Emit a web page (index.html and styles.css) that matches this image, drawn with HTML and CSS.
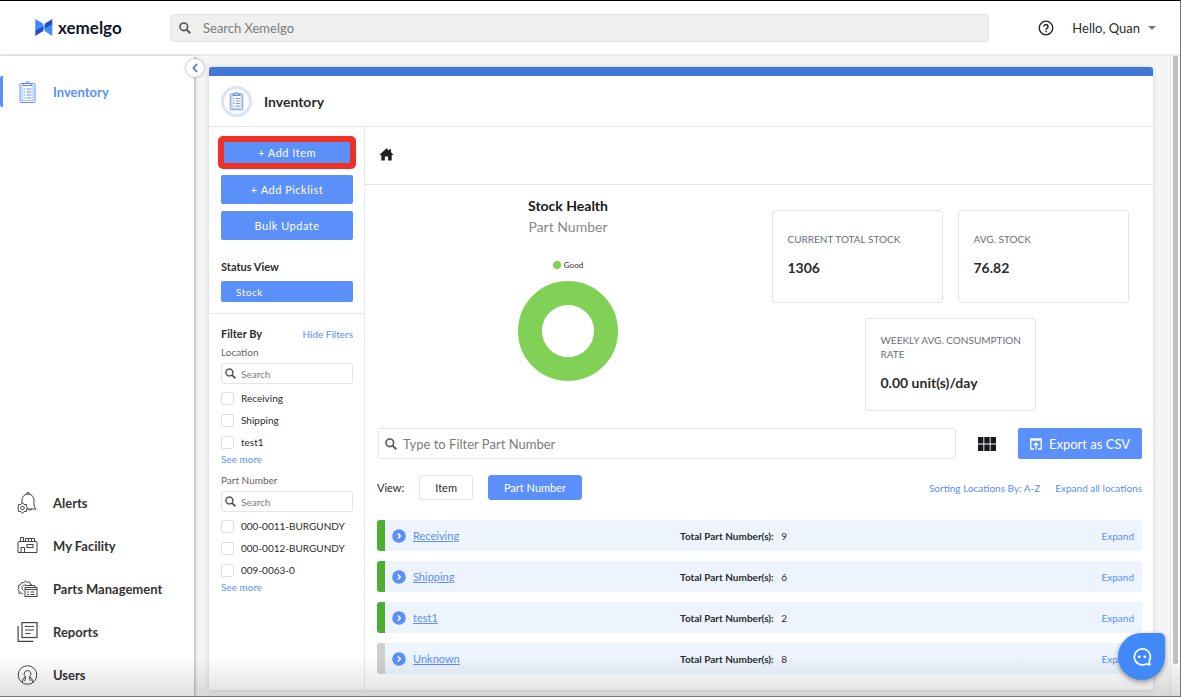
FILE: index.html
```
<!DOCTYPE html>
<html lang="en">
<head>
    <meta charset="UTF-8">
    <meta name="viewport" content="width=device-width, initial-scale=1.0">
    <title>Xemelgo - Inventory</title>
    <link rel="stylesheet" href="styles.css">
</head>
<body>
    <!-- shared icons -->
    <svg class="sprite" width="0" height="0" aria-hidden="true">
        <symbol id="search" viewBox="0 0 12 12">
            <circle cx="4.8" cy="4.8" r="3.8" fill="none" stroke="currentColor" stroke-width="1.6"/>
            <path d="M7.6 7.6L11.2 11.2" stroke="currentColor" stroke-width="2"/>
        </symbol>
        <symbol id="clipboard" viewBox="0 0 18 24">
            <g fill="none" stroke="currentColor" stroke-width="1">
                <rect x="1.5" y="3.5" width="15" height="19" rx="1"/>
                <rect x="3.5" y="5.5" width="11" height="15" stroke-opacity="0.6"/>
                <path d="M5 5.5v-2h2.2a1.8 1.8 0 0 1 3.6 0H13v2z"/>
                <path d="M5 9h1.5M8 9h5M5 12h1.5M8 12h5M5 15h1.5M8 15h5M5 18h1.5M8 18h5"/>
            </g>
        </symbol>
        <symbol id="go" viewBox="0 0 14 14">
            <circle cx="7" cy="7" r="6.8" fill="#5b8ff9"/>
            <path d="M5.8 4.4L8.4 7L5.8 9.6" fill="none" stroke="#fff" stroke-width="1.4"/>
        </symbol>
    </svg>

    <header class="topbar">
        <a class="logo" href="#">
            <svg width="18" height="17" viewBox="0 0 18 17">
                <path d="M.3 0L7.500 4.300Q8.600 5.200 8.600 7L.3 11z" fill="#3f8cf7"/>
                <path d="M8.600 7v3.500q0 1.300-1.100 2L.3 17v-6z" fill="#1f50d0"/>
                <path d="M17.300 0L10.500 4.300Q9.400 5.200 9.400 7v3L17.300 6z" fill="#1f50d0"/>
                <path d="M9.400 9.500v1q0 1.300 1.100 2l6.800 4.500V6z" fill="#3f8cf7"/>
            </svg>
            <span>xemelgo</span>
        </a>
        <div class="search-box top-search">
            <svg width="12" height="12"><use href="#search"/></svg>
            <input type="text" placeholder="Search Xemelgo" aria-label="Search Xemelgo">
        </div>
        <button class="icon-button help" type="button" aria-label="Help">
            <svg width="16" height="16" viewBox="0 0 16 16" fill="none" stroke="#222">
                <circle cx="8" cy="8" r="6.800" stroke-width="1.300"/>
                <path d="M6 6.600a2 2 0 1 1 3.100 1.600q-1.100.7-1.100 1.500" stroke-width="1.500"/>
                <path d="M8 10.700v1.500" stroke-width="1.500"/>
            </svg>
        </button>
        <button class="user" type="button">Hello, Quan <span class="caret"></span></button>
    </header>

    <div class="layout">
        <nav class="sidebar">
            <a class="nav-item active" href="#">
                <svg width="18" height="24"><use href="#clipboard"/></svg>
                <span>Inventory</span>
            </a>
            <div class="nav-bottom">
                <a class="nav-item" href="#">
                    <svg width="20" height="22" viewBox="0 0 20 22" fill="none" stroke="#444">
                        <path d="M4.500 11V8a6 6 0 0 1 12 0v5q0 2 2 4H9"/>
                        <path d="M9 2q0-1.500 1.500-1.500T12 2M11 17.500q2 2 3.500-.5"/>
                        <path d="M5 10.800l1.600 1.700 2.500.1v2.300L10 16l-.9 1.200v2.200l-2.500.1L5 21.300l-1.600-1.800-2.500-.1v-2.200L.4 16l.5-1.100v-2.300l2.500-.1z"/>
                        <circle cx="5" cy="16" r="1.800"/>
                    </svg>
                    <span>Alerts</span>
                </a>
                <a class="nav-item" href="#">
                    <svg width="20" height="17" viewBox="0 0 20 17" fill="none" stroke="#444">
                        <path d="M.5 5.500q0-1 1-1h17q1 0 1 1v10h-19zM3 4V.5h3V4M8 4V1.500h9V4M11 1.500V4M14 1.500V4"/>
                        <path d="M3.500 15.500v-5h3.500v5"/>
                        <rect x="9.500" y="7.500" width="6" height="3"/>
                    </svg>
                    <span>My Facility</span>
                </a>
                <a class="nav-item" href="#">
                    <svg width="20" height="17" viewBox="0 0 20 17" fill="none" stroke="#444">
                        <path d="M5.500 14.500L4 13l-2.500.3L1.700 11 .5 9.500 1.500 8 .8 5.500 3 4.700 4 2.500l2.300.3L8 .8l1.700 1.500 2.500-.3.600 2.500 1.700.5"/>
                        <path d="M6 10.500Q3.500 9 4.500 6.700T8.500 5"/>
                        <path d="M8 5.500h9l.5 1.500"/>
                        <rect x="7.500" y="7.500" width="12" height="9"/>
                        <path d="M7.500 9.500h12M9.500 12h2M13 12h4M9.500 14.500h2M13 14.500h4"/>
                    </svg>
                    <span>Parts Management</span>
                </a>
                <a class="nav-item" href="#">
                    <svg width="20" height="20" viewBox="0 0 20 20" fill="none" stroke="#444" stroke-width="1.200">
                        <rect x="4.500" y=".6" width="15" height="14.900"/>
                        <path d="M.6 4v15.400H16M7.500 4.500h9M7.500 8h9M7.500 11.500h5.500"/>
                    </svg>
                    <span>Reports</span>
                </a>
                <a class="nav-item" href="#">
                    <svg width="20" height="20" viewBox="0 0 20 20" fill="none" stroke="#444">
                        <circle cx="10" cy="10" r="9.300"/>
                        <path d="M4.800 17.500q0-4.500 3.300-5.700a3.400 3.400 0 1 1 3.800 0q3.300 1.200 3.300 5.700M8 12q0 2-1 4M12 12q0 2 1 4"/>
                    </svg>
                    <span>Users</span>
                </a>
            </div>
            <button class="collapse" type="button" aria-label="Collapse menu">
                <svg width="6" height="10" viewBox="0 0 6 10"><path d="M5 1L1.500 5L5 9" fill="none" stroke="#3f7df5" stroke-width="1.800"/></svg>
            </button>
        </nav>

        <main class="content">
            <section class="panel">
                <div class="panel-head">
                    <span class="badge"><svg width="15" height="20"><use href="#clipboard"/></svg></span>
                    <h1>Inventory</h1>
                </div>
                <div class="panel-body">
                    <aside class="filters">
                        <div class="actions">
                            <button class="btn highlighted" type="button">+ Add Item</button>
                            <button class="btn" type="button">+ Add Picklist</button>
                            <button class="btn" type="button">Bulk Update</button>
                            <h2>Status View</h2>
                            <button class="btn status" type="button">Stock</button>
                        </div>
                        <div class="filter-list">
                            <div class="filter-head">
                                <h2>Filter By</h2>
                                <a href="#">Hide Filters</a>
                            </div>
                            <div class="filter-group">
                                <h3>Location</h3>
                                <div class="search-box small">
                                    <svg width="11" height="11"><use href="#search"/></svg>
                                    <input type="text" placeholder="Search" aria-label="Search location">
                                </div>
                                <label><input type="checkbox"> Receiving</label>
                                <label><input type="checkbox"> Shipping</label>
                                <label><input type="checkbox"> test1</label>
                                <a href="#">See more</a>
                            </div>
                            <div class="filter-group">
                                <h3>Part Number</h3>
                                <div class="search-box small">
                                    <svg width="11" height="11"><use href="#search"/></svg>
                                    <input type="text" placeholder="Search" aria-label="Search part number">
                                </div>
                                <label><input type="checkbox"> 000-0011-BURGUNDY</label>
                                <label><input type="checkbox"> 000-0012-BURGUNDY</label>
                                <label><input type="checkbox"> 009-0063-0</label>
                                <a href="#">See more</a>
                            </div>
                        </div>
                    </aside>

                    <div class="details">
                        <div class="breadcrumb">
                            <a href="#" aria-label="Home">
                                <svg width="15" height="13" viewBox="0 0 15 13"><path d="M7.500.3L.4 7h1.900v5.600h3.600V8.500h3.200v4.100h3.600V7h1.900L12 4.300V1.200h-1.800v1.500z" fill="#222"/></svg>
                            </a>
                        </div>
                        <div class="overview">
                            <div class="chart">
                                <h2>Stock Health</h2>
                                <p class="chart-sub">Part Number</p>
                                <p class="legend"><span class="dot"></span>Good</p>
                                <svg width="100" height="100" viewBox="0 0 100 100"><circle cx="50" cy="50" r="38" fill="none" stroke="#80d155" stroke-width="24"/></svg>
                            </div>
                            <div class="stats">
                                <div class="stat">
                                    <p class="stat-name">CURRENT TOTAL STOCK</p>
                                    <p class="stat-value">1306</p>
                                </div>
                                <div class="stat">
                                    <p class="stat-name">AVG. STOCK</p>
                                    <p class="stat-value">76.82</p>
                                </div>
                                <div class="stat">
                                    <p class="stat-name">WEEKLY AVG. CONSUMPTION RATE</p>
                                    <p class="stat-value">0.00 unit(s)/day</p>
                                </div>
                            </div>
                        </div>

                        <div class="toolbar">
                            <div class="search-box">
                                <svg width="12" height="12"><use href="#search"/></svg>
                                <input type="text" placeholder="Type to Filter Part Number" aria-label="Filter part number">
                            </div>
                            <button class="icon-button" type="button" aria-label="Grid view">
                                <svg width="18" height="14" viewBox="0 0 18 14"><path d="M0 0h5.400v6.400H0zM6.300 0h5.400v6.400H6.300zM12.600 0H18v6.400h-5.400zM0 7.500h5.400V14H0zM6.300 7.500h5.400V14H6.300zM12.600 7.500H18V14h-5.400z" fill="#16181d"/></svg>
                            </button>
                            <button class="btn export" type="button">
                                <svg width="12" height="12" viewBox="0 0 12 12" fill="none" stroke="#fff" stroke-width="1.300"><path d="M4 11H.8V.8h10.400V11H8M.8 2h10.400M6 11.500V5M3.700 7.200L6 4.900l2.300 2.300"/></svg>
                                Export as CSV
                            </button>
                        </div>

                        <div class="view-row">
                            <span>View:</span>
                            <button class="view-btn" type="button">Item</button>
                            <button class="view-btn selected" type="button">Part Number</button>
                            <a class="first-link" href="#">Sorting Locations By: A-Z</a>
                            <a href="#">Expand all locations</a>
                        </div>

                        <ul class="locations">
                            <li>
                                <svg width="14" height="14"><use href="#go"/></svg>
                                <a class="name" href="#">Receiving</a>
                                <p><b>Total Part Number(s):</b> 9</p>
                                <a class="expand" href="#">Expand</a>
                            </li>
                            <li>
                                <svg width="14" height="14"><use href="#go"/></svg>
                                <a class="name" href="#">Shipping</a>
                                <p><b>Total Part Number(s):</b> 6</p>
                                <a class="expand" href="#">Expand</a>
                            </li>
                            <li>
                                <svg width="14" height="14"><use href="#go"/></svg>
                                <a class="name" href="#">test1</a>
                                <p><b>Total Part Number(s):</b> 2</p>
                                <a class="expand" href="#">Expand</a>
                            </li>
                            <li class="unknown">
                                <svg width="14" height="14"><use href="#go"/></svg>
                                <a class="name" href="#">Unknown</a>
                                <p><b>Total Part Number(s):</b> 8</p>
                                <a class="expand" href="#">Expand</a>
                            </li>
                        </ul>
                    </div>
                </div>
            </section>
        </main>
        <div class="scrollbar"><div class="thumb"></div></div>
    </div>

    <button class="chat" type="button" aria-label="Open chat">
        <svg width="20" height="20" viewBox="0 0 20 20">
            <path d="M17.300 13.800a8 8 0 1 0-3.200 3.100q2 .9 3.900.7-.9-1.800-.7-3.800z" fill="none" stroke="#fff" stroke-width="1.700" stroke-linejoin="round"/>
            <circle cx="7.200" cy="9.800" r="1.400" fill="#fff"/>
            <circle cx="12.800" cy="9.800" r="1.400" fill="#fff"/>
        </svg>
    </button>
</body>
</html>
```
FILE: styles.css
```
* {
    box-sizing: border-box;
}

body {
    display: flex;
    flex-direction: column;
    height: 100vh;
    margin: 0;
    overflow: hidden;
    position: relative;
    border-top: 1px solid #000;
    border-right: 1px solid #777;
    border-bottom: 1px solid #777;
    font-family: Lato, "Liberation Sans", sans-serif;
    font-size: 11px;
    color: #2b2b2b;
    background-color: #fff;
}

/* shade along the bottom of the window */
body::after {
    content: "";
    position: absolute;
    z-index: 2;
    left: 0;
    right: 0;
    bottom: 0;
    height: 40px;
    background: linear-gradient(rgba(0, 0, 0, 0), rgba(0, 0, 0, 0.12));
    pointer-events: none;
}

h1, h2, h3, p, ul {
    margin: 0;
    padding: 0;
}

h2 {
    font-size: 11px;
    line-height: 14px;
}

a {
    color: #5b8ff9;
    text-decoration: none;
}

button, input {
    font-family: inherit;
    font-size: inherit;
    color: inherit;
}

button {
    padding: 0;
    border: none;
    background: none;
    cursor: pointer;
}

svg {
    display: block;
    flex: none;
}

.sprite {
    position: absolute;
}

/* top bar */
.topbar {
    display: flex;
    flex: none;
    align-items: center;
    height: 55px;
    padding: 0 24px 0 35px;
    border-bottom: 2px solid #ebebeb;
}

.logo {
    display: flex;
    align-items: center;
    gap: 5px;
    width: 135px;
    font-size: 17px;
    font-weight: bold;
    line-height: 20px;
    color: #11152d;
}

.search-box {
    display: flex;
    flex: 1;
    align-items: center;
    gap: 6px;
    height: 31px;
    padding: 0 6px;
    border: 1px solid #e3e4e8;
    border-radius: 3px;
    color: #555;
    font-size: 13px;
}

.search-box input {
    width: 100%;
    padding: 0;
    border: none;
    outline: none;
    background: none;
}

.search-box input::placeholder {
    color: #7c7c7c;
}

.top-search {
    gap: 12px;
    height: 28px;
    padding: 0 8px;
    background-color: #efefef;
}

.icon-button {
    flex: none;
}

.help {
    margin: 0 18px 0 49px;
}

.user {
    display: flex;
    align-items: center;
    gap: 8px;
    font-size: 13px;
}

.caret {
    border: 4px solid transparent;
    border-top-color: #777;
    border-bottom: none;
}

/* side menu */
.layout {
    display: flex;
    flex: 1;
    min-height: 0;
}

.sidebar {
    position: relative;
    z-index: 1;
    display: flex;
    flex: none;
    flex-direction: column;
    width: 194px;
    padding: 20px 0 6px;
    background-color: #fff;
    box-shadow: 1px 1px 3px rgba(0, 0, 0, 0.3);
}

.nav-item {
    display: flex;
    align-items: center;
    gap: 15px;
    height: 31px;
    padding-left: 17px;
    font-size: 13px;
    font-weight: bold;
    color: #333;
}

.nav-item svg {
    width: 21px;
}

.nav-item.active {
    padding-left: 14px;
    border-left: 3px solid #5b8ff9;
    border-radius: 2px;
    color: #5b8ff9;
}

.nav-bottom {
    display: flex;
    flex-direction: column;
    gap: 12px;
    margin-top: auto;
}

.collapse {
    position: absolute;
    top: 3px;
    right: -10px;
    display: flex;
    align-items: center;
    justify-content: center;
    width: 18px;
    height: 18px;
    border-radius: 50%;
    background-color: #fff;
    box-shadow: 0 0 3px rgba(0, 0, 0, 0.4);
}

/* main panel */
.content {
    display: flex;
    flex: 1;
    min-width: 0;
    padding: 11px 17px 6px 15px;
    background-color: #f5f5f5;
}

.panel {
    display: flex;
    flex: 1;
    flex-direction: column;
    min-width: 0;
    border-top: 9px solid #4178d4;
    border-radius: 3px 3px 0 0;
    background-color: #fff;
    box-shadow: 0 0 5px rgba(0, 0, 0, 0.15);
}

.panel-head {
    display: flex;
    flex: none;
    align-items: center;
    gap: 12px;
    height: 51px;
    padding-left: 12px;
    border-bottom: 1px solid #e3e4ea;
}

.panel-head h1 {
    font-size: 14px;
}

.badge {
    display: flex;
    align-items: center;
    justify-content: center;
    width: 31px;
    height: 31px;
    border: 3px solid #d7e3f7;
    border-radius: 50%;
    color: #5583c9;
}

.panel-body {
    display: flex;
    flex: 1;
    min-height: 0;
}

.filters {
    flex: none;
    width: 156px;
    border-right: 1px solid #e8e9ed;
}

.actions {
    display: flex;
    flex-direction: column;
    gap: 7px;
    padding: 12px 11px 11px 12px;
    border-bottom: 1px solid #e8e9ed;
}

.btn {
    height: 29px;
    border-radius: 2px;
    color: #fff;
    background-color: #5b8ff9;
}

.actions .btn {
    letter-spacing: 0.5px;
}

.highlighted {
    height: 27px;
    margin-bottom: 2px;
    outline: 6px solid #ee3124;
    outline-offset: -3px;
}

.actions h2 {
    margin-top: 13px;
}

.actions .status {
    height: 21px;
    padding-left: 15px;
    font-size: 10px;
    text-align: left;
}

.filter-list {
    display: flex;
    flex-direction: column;
    gap: 9px;
    padding: 13px 11px 13px 12px;
    font-size: 10px;
}

.filter-head {
    display: flex;
    align-items: center;
    justify-content: space-between;
    margin-bottom: -4px;
}

.filter-group {
    display: flex;
    flex-direction: column;
    line-height: 12px;
}

.filter-group h3 {
    margin-bottom: 5px;
    font-size: 10px;
    font-weight: normal;
    color: #666;
}

.filter-group .small {
    flex: none;
    gap: 5px;
    height: 21px;
    margin-bottom: 3px;
    padding: 0 3px;
    font-size: 10px;
}

.filter-group label {
    display: flex;
    align-items: center;
    gap: 7px;
    height: 22px;
}

.filter-group input[type="checkbox"] {
    appearance: none;
    width: 13px;
    height: 13px;
    margin: 0;
    border: 1px solid #dddfe6;
    border-radius: 2px;
}

.filter-group input[type="checkbox"]:checked {
    background-color: #5b8ff9;
}

.details {
    flex: 1;
    min-width: 0;
}

.breadcrumb {
    display: flex;
    align-items: center;
    height: 58px;
    padding: 0 14px 2px;
    border-bottom: 1px solid #e3e4ea;
}

.overview {
    display: grid;
    grid-template-columns: 1fr 1fr;
    padding: 11px 12px 17px;
}

.chart {
    display: flex;
    flex-direction: column;
    align-items: center;
}

.chart h2 {
    font-size: 14px;
    line-height: 20px;
    color: #16181d;
}

.chart-sub {
    font-size: 14px;
    line-height: 22px;
    color: #888;
}

.legend {
    display: flex;
    align-items: center;
    gap: 3px;
    margin: 21px 0 10px;
    font-size: 8px;
    line-height: 12px;
}

.dot {
    width: 8px;
    height: 8px;
    border-radius: 50%;
    background-color: #80d155;
}

.stats {
    display: flex;
    flex-wrap: wrap;
    align-content: flex-start;
    justify-content: center;
    gap: 15px;
    padding-top: 14px;
}

.stat {
    display: flex;
    flex-direction: column;
    justify-content: center;
    gap: 14px;
    width: 171px;
    height: 93px;
    padding: 0 8px 5px 15px;
    border: 1px solid #e3e4ea;
    border-radius: 3px;
}

.stat-name {
    font-size: 10px;
    line-height: 14px;
    color: #6b6d76;
}

.stat-value {
    font-size: 14px;
    font-weight: bold;
    line-height: 16px;
}

.toolbar {
    display: flex;
    align-items: center;
    gap: 22px;
    padding: 0 11px 0 13px;
}

.export {
    display: flex;
    align-items: center;
    justify-content: center;
    gap: 7px;
    width: 124px;
    height: 31px;
    font-size: 13px;
}

.view-row {
    display: flex;
    align-items: center;
    gap: 15px;
    padding: 16px 11px 20px 12px;
}

.view-btn {
    height: 25px;
    padding: 0 15px;
    border: 1px solid #e3e4e8;
    border-radius: 3px;
}

.view-btn.selected {
    border-color: #5b8ff9;
    color: #fff;
    background-color: #5b8ff9;
}

.view-row a {
    font-size: 10px;
}

.view-row .first-link {
    margin-left: auto;
}

.locations {
    display: flex;
    flex-direction: column;
    gap: 10px;
    padding: 0 11px 0 12px;
    list-style: none;
}

.locations li {
    display: grid;
    grid-template-columns: 21px 36% 1fr auto;
    align-items: center;
    height: 31px;
    padding: 0 8px 0 7px;
    border-left: 8px solid #4eae33;
    border-radius: 3px;
    font-size: 10px;
    background-color: #edf4fe;
}

.locations .unknown {
    border-left-color: #d0d0d0;
}

.locations .name {
    font-size: 11px;
    text-decoration: underline;
}

.locations b {
    margin-right: 5px;
}

.scrollbar {
    flex: none;
    width: 10px;
    padding: 0 2px;
    border-left: 1px solid #e6e6e6;
    background-color: #fafafa;
}

.thumb {
    height: 95%;
    border-radius: 0 0 3px 3px;
    background-color: #c1c1c1;
}

.chat {
    position: absolute;
    right: 15px;
    bottom: 16px;
    z-index: 3;
    display: flex;
    align-items: center;
    justify-content: center;
    width: 47px;
    height: 47px;
    border-radius: 50% 5px 50% 50%;
    background-color: #4189f7;
    box-shadow: 0 2px 5px rgba(0, 0, 0, 0.4);
}
```
